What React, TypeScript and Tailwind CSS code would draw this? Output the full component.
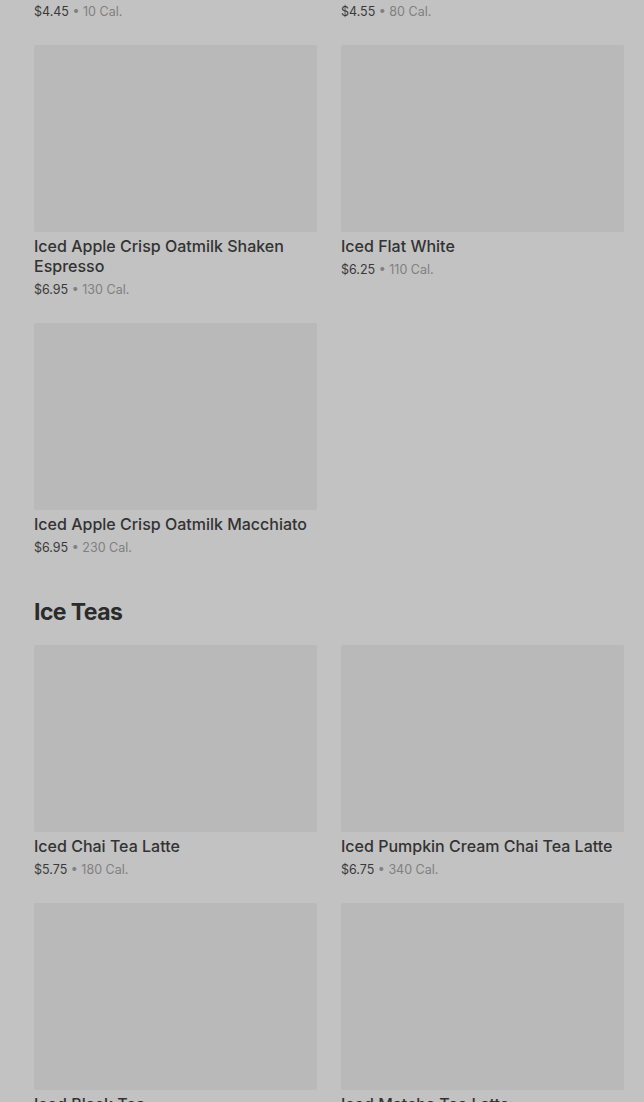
import React from 'react';

interface Item {
  name: string;
  price: string;
  cal: string;
}

const PriceLine: React.FC<{ price: string; cal: string }> = ({ price, cal }) => (
  <p className="text-[12.5px] leading-[17px] text-[#3a3a3a]">
    {price}
    <span className="text-[#808080]"> • {cal} Cal.</span>
  </p>
);

const ItemCard: React.FC<{ item: Item }> = ({ item }) => (
  <div>
    <div className="h-[187px] rounded-[2px] bg-[#b9b9b9]" />
    <h3 className="mt-[4px] text-[16px] font-medium leading-5 text-[#333]">{item.name}</h3>
    <div className="mt-[5px]">
      <PriceLine price={item.price} cal={item.cal} />
    </div>
  </div>
);

const espresso: Item[] = [
  { name: 'Iced Apple Crisp Oatmilk Shaken Espresso', price: '$6.95', cal: '130' },
  { name: 'Iced Flat White', price: '$6.25', cal: '110' },
  { name: 'Iced Apple Crisp Oatmilk Macchiato', price: '$6.95', cal: '230' },
];

const teas: Item[] = [
  { name: 'Iced Chai Tea Latte', price: '$5.75', cal: '180' },
  { name: 'Iced Pumpkin Cream Chai Tea Latte', price: '$6.75', cal: '340' },
  { name: 'Iced Black Tea', price: '$3.95', cal: '80' },
  { name: 'Iced Matcha Tea Latte', price: '$5.45', cal: '200' },
];

export default function App() {
  return (
    <div
      className="h-[1102px] overflow-hidden bg-[#c2c2c2] pl-[34px] pr-[20px]"
      style={{ fontFamily: 'Inter, "Noto Sans", sans-serif' }}
    >
      <div className="grid grid-cols-2 gap-x-6 pt-[3px]">
        <PriceLine price="$4.45" cal="10" />
        <PriceLine price="$4.55" cal="80" />
      </div>

      <div className="mt-[25px] grid grid-cols-2 gap-x-6 gap-y-[25px]">
        {espresso.map((it) => (
          <ItemCard key={it.name} item={it} />
        ))}
      </div>

      <h2 className="mt-[40px] text-[23px] font-bold leading-8 tracking-tight text-[#2b2b2b]">Ice Teas</h2>

      <div className="mt-[17px] grid grid-cols-2 gap-x-6 gap-y-[25px]">
        {teas.map((it) => (
          <ItemCard key={it.name} item={it} />
        ))}
      </div>
    </div>
  );
}
